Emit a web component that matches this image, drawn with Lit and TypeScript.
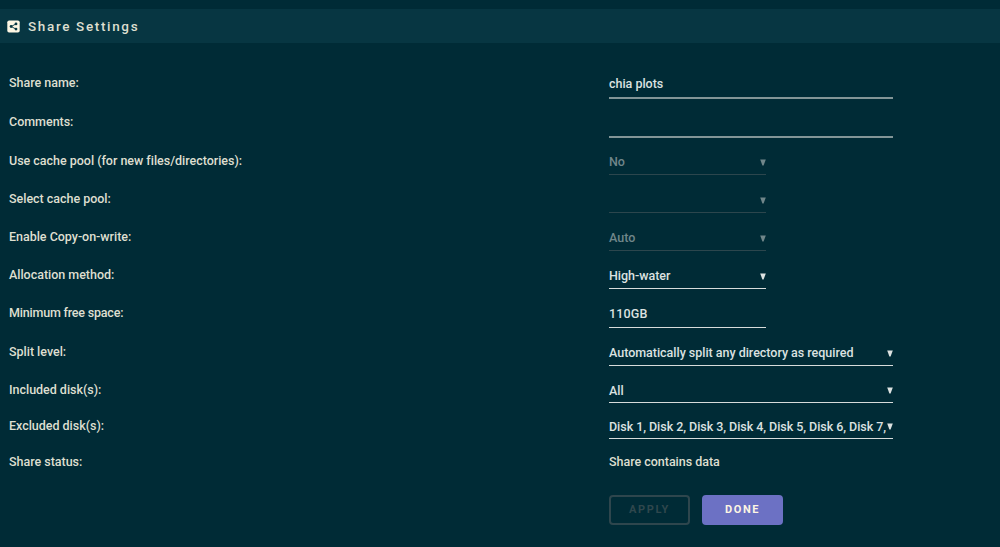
import { LitElement, html, css, svg } from "lit";
import { customElement } from "lit/decorators.js";
import { classMap } from "lit/directives/class-map.js";

interface Row {
  label: string;
  value: string;
  size: string;
  kind: "input" | "select";
  disabled?: boolean;
}

const ROWS: Row[] = [
  { label: "Share name:", value: "chia plots", size: "wide", kind: "input" },
  { label: "Comments:", value: "", size: "wide", kind: "input" },
  { label: "Use cache pool (for new files/directories):", value: "No", size: "narrow", kind: "select", disabled: true },
  { label: "Select cache pool:", value: "", size: "narrow", kind: "select", disabled: true },
  { label: "Enable Copy-on-write:", value: "Auto", size: "narrow", kind: "select", disabled: true },
  { label: "Allocation method:", value: "High-water", size: "narrow", kind: "select" },
  { label: "Minimum free space:", value: "110GB", size: "narrow", kind: "input" },
  { label: "Split level:", value: "Automatically split any directory as required", size: "wide", kind: "select" },
  { label: "Included disk(s):", value: "All", size: "wide", kind: "select" },
  { label: "Excluded disk(s):", value: "Disk 1, Disk 2, Disk 3, Disk 4, Disk 5, Disk 6, Disk 7,", size: "wide", kind: "select" },
];

@customElement("app-root")
export class AppRoot extends LitElement {
  static styles = css`
    :host {
      display: block;
      box-sizing: border-box;
      height: 547px;
      padding-top: 9px;
      overflow: hidden;
      background: #002b36;
      color: #dedfd0;
      font: 500 12.5px/18px Roboto, "Liberation Sans", sans-serif;
      letter-spacing: -0.02px;
    }
    .title {
      display: flex;
      align-items: center;
      height: 34px;
      padding-left: 7px;
      background: #073642;
      font-size: 13.5px;
      letter-spacing: 1.65px;
      gap: 8px;
    }
    .title svg { display: block; }
    .title span { padding-bottom: 1px; }
    .form {
      display: grid;
      grid-template-rows: 56px 39px 37px 38px 38px 38px 39px 38px 37px 36px 46px;
    }
    .row {
      display: grid;
      grid-template-columns: 600px 1fr;
      align-items: end;
      padding-left: 9px;
      white-space: nowrap;
    }
    .label { padding-bottom: 5px; }
    .row:nth-child(-n + 2) .label { padding-bottom: 7px; }
    .row:nth-child(7) .label { padding-bottom: 6px; letter-spacing: -0.2px; }
    .row:nth-child(n + 9) .label { padding-bottom: 4px; }
    .field {
      box-sizing: border-box;
      display: flex;
      justify-content: space-between;
      align-items: center;
      height: 22px;
      padding-bottom: 3px;
      border-bottom: 1px solid #d7dcdb;
      color: #dce2e1;
    }
    .row:nth-child(-n + 2) .field { height: 24px; padding-bottom: 4px; border-bottom: 2px solid #829597; }
    .row:nth-child(7) .field { height: 24px; padding-bottom: 4px; letter-spacing: 0.15px; }
    .row:nth-child(n + 9) .field { height: 22px; padding-bottom: 2px; }
    .row:nth-child(10) .text { letter-spacing: -0.05px; }
    .wide { width: 284px; }
    .narrow { width: 157px; }
    .row .off { color: #70868a; border-bottom-color: #2c464d; }
    .text { flex: none; }
    .arrow { display: block; flex: none; margin-left: -6px; }
    .row.status { align-items: start; padding-top: 14px; }
    .status .label { padding: 0; }
    .buttons { display: flex; gap: 12px; padding: 10px 0 0 609px; }
    button {
      box-sizing: border-box;
      width: 81px;
      height: 30px;
      padding: 0;
      border: 2px solid #6c71c4;
      border-radius: 4px;
      background: #6c71c4;
      color: #fdf6e3;
      font: 700 11px/14px Roboto, sans-serif;
      letter-spacing: 1.6px;
    }
    button:disabled { border-color: #2e464d; background: none; color: #2f474d; }
  `;

  private arrow() {
    return html`<svg class="arrow" width="6" height="7" viewBox="0 0 6 7">
      ${svg`<path fill="currentColor" d="M.2.5h5.6L3.6 6.4H2.4z"/>`}
    </svg>`;
  }

  render() {
    return html`
      <div class="title">
        <svg width="13" height="13" viewBox="0 0 13 13">
          <rect x=".3" y=".5" width="12.4" height="12" rx="1.8" fill="#fdf6e3" />
          <path d="M9 3.9 4.2 6.5 9 9.1" fill="none" stroke="#073642" stroke-width="0.9" />
          <g fill="#073642">
            <circle cx="9" cy="3.9" r="1.4" />
            <circle cx="4.1" cy="6.5" r="1.4" />
            <circle cx="9" cy="9.1" r="1.4" />
          </g>
        </svg>
        <span>Share Settings</span>
      </div>
      <div class="form">
        ${ROWS.map(
          (r) => html`<div class="row">
            <span class="label">${r.label}</span>
            <div class="field ${classMap({ [r.size]: true, off: !!r.disabled })}">
              <span class="text">${r.value}</span>
              ${r.kind === "select" ? this.arrow() : null}
            </div>
          </div>`
        )}
        <div class="row status">
          <span class="label">Share status:</span>
          <span>Share contains data</span>
        </div>
      </div>
      <div class="buttons">
        <button disabled>APPLY</button>
        <button>DONE</button>
      </div>
    `;
  }
}
